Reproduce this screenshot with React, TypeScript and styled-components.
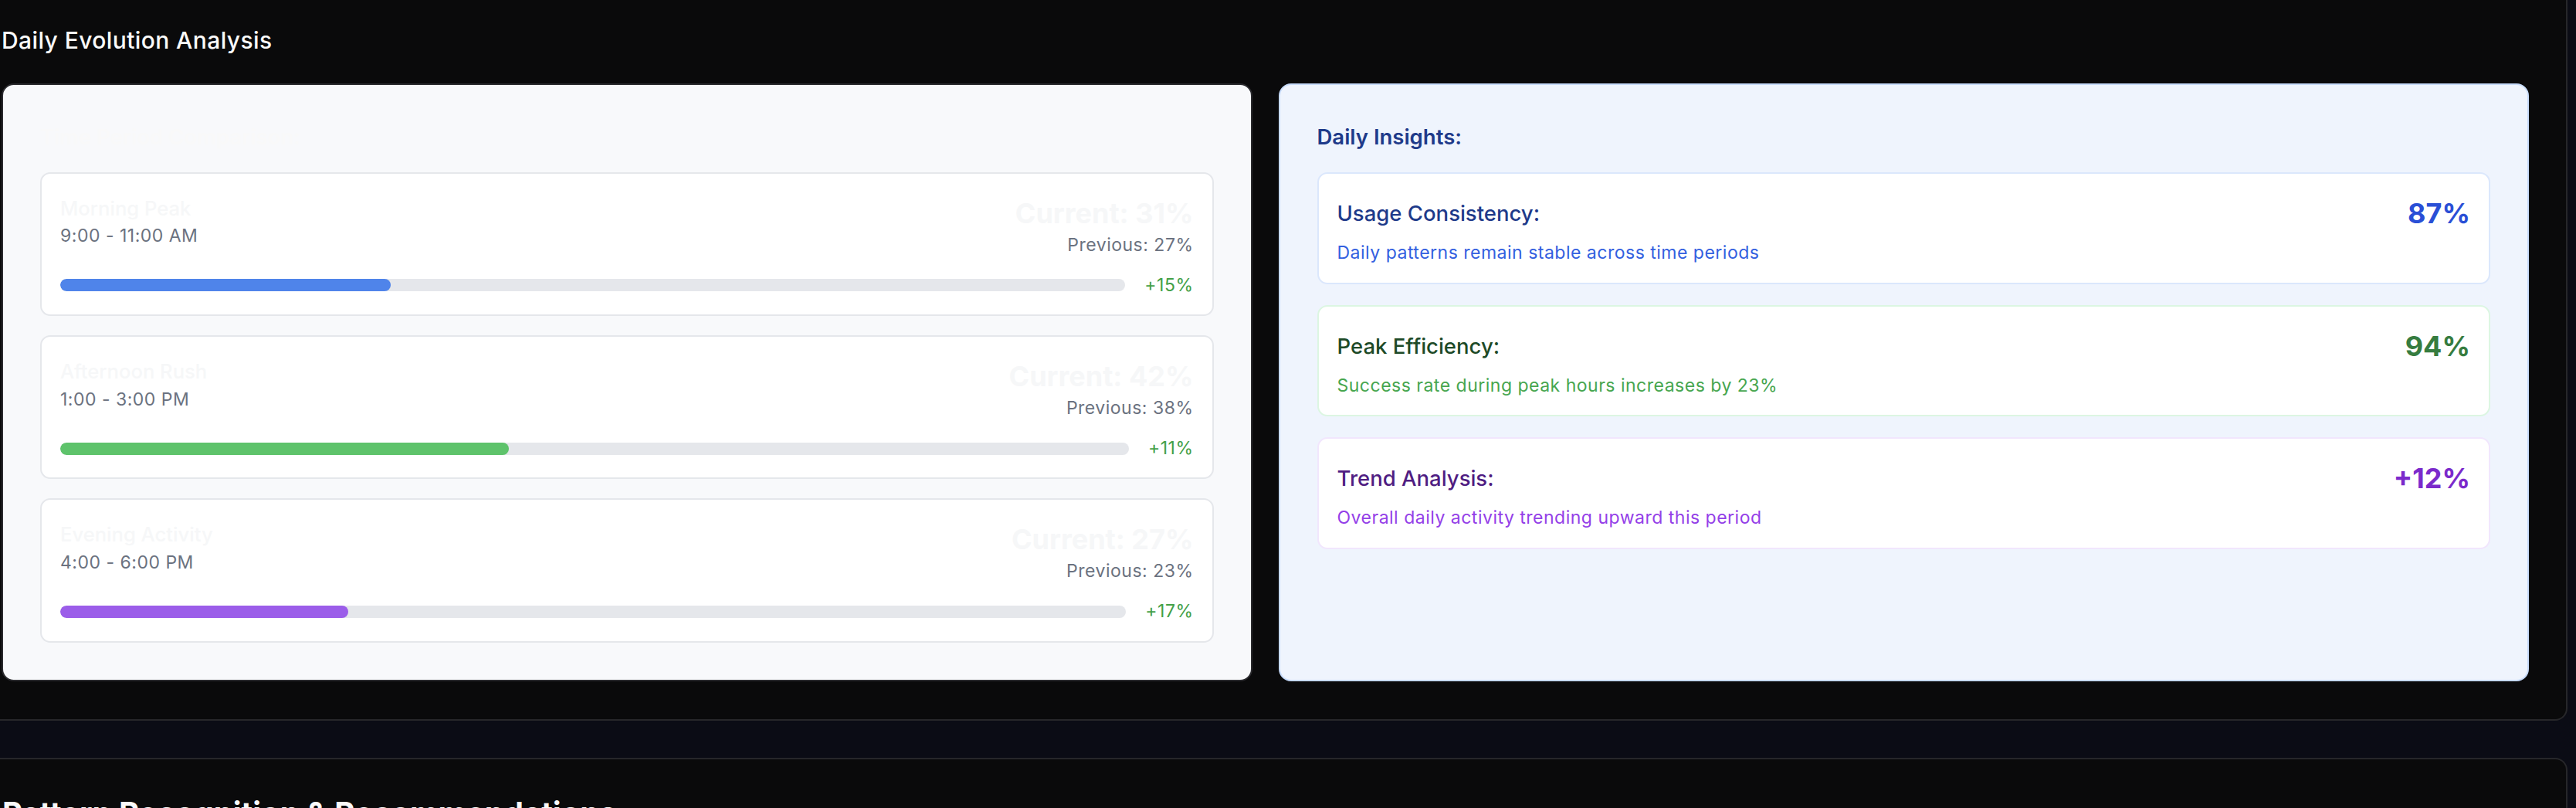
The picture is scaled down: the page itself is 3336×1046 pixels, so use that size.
import React from "react";
import styled, { createGlobalStyle } from "styled-components";

const GlobalStyle = createGlobalStyle`
  html, body {
    margin: 0;
    padding: 0;
    background: #0b0c15;
    overflow: hidden;
  }
  body {
    font-family: Inter, "Noto Sans", "Liberation Sans", sans-serif;
    -webkit-font-smoothing: antialiased;
  }
  * { box-sizing: border-box; }
`;

const Page = styled.div`
  display: flex;
  flex-direction: column;
  gap: 48px;
  padding-right: 11px;
  height: 1046px;
  overflow: hidden;
`;

const Section = styled.section`
  background: #0a0a0b;
  border-right: 2px solid #27272a;
  border-bottom: 2px solid #27272a;
  border-bottom-right-radius: 16px;
  padding: 31px 48px 49px 2px;
`;

const NextSection = styled.section`
  flex: 1;
  background: #0a0a0b;
  border-top: 2px solid #27272a;
  border-right: 2px solid #27272a;
  border-top-right-radius: 16px;
  padding: 46px 48px 0 3px;
`;

const SectionTitle = styled.h2`
  margin: 0 0 34px;
  font-size: 30px;
  line-height: 43px;
  font-weight: 500;
  letter-spacing: 0.4px;
  color: #fafafa;
`;

const BigTitle = styled.h2`
  margin: 0;
  font-size: 40px;
  line-height: 48px;
  font-weight: 700;
  color: #fafafa;
  white-space: nowrap;
`;

const Grid = styled.div`
  display: grid;
  grid-template-columns: 1fr 1fr;
  gap: 34px;
`;

const Panel = styled.div<{ $tone: "gray" | "blue" }>`
  background: ${(p) => (p.$tone === "gray" ? "#f8f9fb" : "#eff4fd")};
  border: 2px solid ${(p) => (p.$tone === "gray" ? "#2a2a2e" : "#c7dbfa")};
  border-radius: 16px;
  padding: 48px;
`;

const PanelHeading = styled.h3<{ $color: string }>`
  margin: 0 0 26px;
  font-size: 27.5px;
  line-height: 39px;
  font-weight: 600;
  color: ${(p) => p.$color};
`;

const List = styled.div<{ $gap: number }>`
  display: flex;
  flex-direction: column;
  gap: ${(p) => p.$gap}px;
`;

const PeriodCard = styled.div`
  background: #ffffff;
  border: 2px solid #e5e7eb;
  border-radius: 13px;
  padding: 26px 24px 21px;
`;

const PeriodTop = styled.div`
  display: flex;
  justify-content: space-between;
  align-items: flex-start;
`;

const Col = styled.div<{ $align?: string }>`
  display: flex;
  flex-direction: column;
  align-items: ${(p) => p.$align || "flex-start"};
`;

const PeriodName = styled.div`
  font-size: 25.6px;
  line-height: 38.4px;
  font-weight: 500;
  color: #f6f7f8;
`;

const Muted = styled.div`
  font-size: 23px;
  line-height: 33.6px;
  letter-spacing: 0.5px;
  color: #6b7280;
`;

const Current = styled.div`
  font-size: 36px;
  line-height: 50px;
  font-weight: 700;
  color: #f6f7f8;
`;

const BarRow = styled.div`
  display: flex;
  align-items: center;
  gap: 25px;
  margin-top: 18px;
`;

const Track = styled.div`
  flex: 1;
  height: 16px;
  border-radius: 8px;
  background: #e5e7eb;
  overflow: hidden;
`;

const Fill = styled.div<{ $color: string }>`
  height: 100%;
  border-radius: 8px;
  background: ${(p) => p.$color};
`;

const Change = styled.div`
  font-size: 23px;
  line-height: 33.6px;
  letter-spacing: 0.5px;
  color: #43a047;
`;

const InsightCard = styled.div<{ $border: string }>`
  background: #ffffff;
  border: 2px solid ${(p) => p.$border};
  border-radius: 13px;
  padding: 26px 24px 21px;
`;

const InsightRow = styled.div`
  display: flex;
  justify-content: space-between;
  align-items: center;
`;

const InsightLabel = styled.div<{ $color: string }>`
  font-size: 27.5px;
  line-height: 40px;
  font-weight: 500;
  color: ${(p) => p.$color};
`;

const InsightValue = styled.div<{ $color: string }>`
  font-size: 36px;
  line-height: 50px;
  font-weight: 700;
  color: ${(p) => p.$color};
`;

const InsightText = styled.div<{ $color: string }>`
  margin-top: 10px;
  font-size: 23px;
  line-height: 33.6px;
  letter-spacing: 0.5px;
  color: ${(p) => p.$color};
`;

const periods = [
  { name: "Morning Peak", time: "9:00 - 11:00 AM", current: 31, previous: 27, change: "+15%", color: "#4f84ea" },
  { name: "Afternoon Rush", time: "1:00 - 3:00 PM", current: 42, previous: 38, change: "+11%", color: "#5ec36b" },
  { name: "Evening Activity", time: "4:00 - 6:00 PM", current: 27, previous: 23, change: "+17%", color: "#9b5de9" },
];

const insights = [
  {
    label: "Usage Consistency:",
    value: "87%",
    text: "Daily patterns remain stable across time periods",
    border: "#dbe7fc",
    labelColor: "#1e3a8a",
    valueColor: "#2a4fd6",
    textColor: "#3360e0",
  },
  {
    label: "Peak Efficiency:",
    value: "94%",
    text: "Success rate during peak hours increases by 23%",
    border: "#dcf6e2",
    labelColor: "#1d4a27",
    valueColor: "#367c40",
    textColor: "#47a64f",
  },
  {
    label: "Trend Analysis:",
    value: "+12%",
    text: "Overall daily activity trending upward this period",
    border: "#f1e6fd",
    labelColor: "#4f1d82",
    valueColor: "#7b2acb",
    textColor: "#9440e8",
  },
];

export default function App() {
  return (
    <>
      <GlobalStyle />
      <Page>
        <Section>
          <SectionTitle>Daily Evolution Analysis</SectionTitle>
          <Grid>
            <Panel $tone="gray">
              <PanelHeading $color="#f9f9f9">Time Period Comparison:</PanelHeading>
              <List $gap={25}>
                {periods.map((p) => (
                  <PeriodCard key={p.name}>
                    <PeriodTop>
                      <Col>
                        <PeriodName>{p.name}</PeriodName>
                        <Muted>{p.time}</Muted>
                      </Col>
                      <Col $align="flex-end">
                        <Current>Current: {p.current}%</Current>
                        <Muted>Previous: {p.previous}%</Muted>
                      </Col>
                    </PeriodTop>
                    <BarRow>
                      <Track>
                        <Fill $color={p.color} style={{ width: `${p.current}%` }} />
                      </Track>
                      <Change>{p.change}</Change>
                    </BarRow>
                  </PeriodCard>
                ))}
              </List>
            </Panel>
            <Panel $tone="blue">
              <PanelHeading $color="#1e3a8a">Daily Insights:</PanelHeading>
              <List $gap={27}>
                {insights.map((i) => (
                  <InsightCard key={i.label} $border={i.border}>
                    <InsightRow>
                      <InsightLabel $color={i.labelColor}>{i.label}</InsightLabel>
                      <InsightValue $color={i.valueColor}>{i.value}</InsightValue>
                    </InsightRow>
                    <InsightText $color={i.textColor}>{i.text}</InsightText>
                  </InsightCard>
                ))}
              </List>
            </Panel>
          </Grid>
        </Section>
        <NextSection>
          <BigTitle>Pattern Recognition &amp; Recommendations</BigTitle>
        </NextSection>
      </Page>
    </>
  );
}
